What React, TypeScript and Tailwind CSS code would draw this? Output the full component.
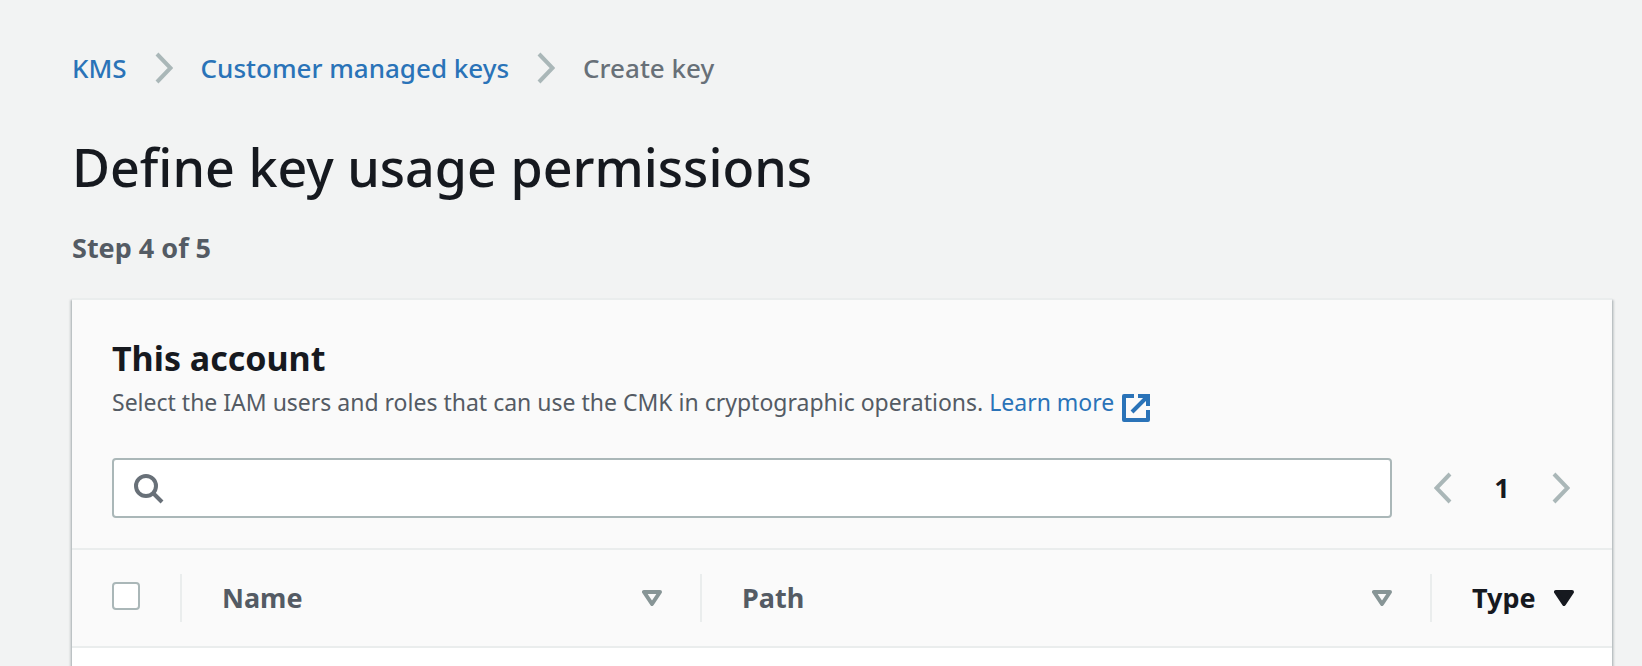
import { useState } from "react";

function Chevron({ left = false }: { left?: boolean }) {
  return (
    <svg width="18" height="32" viewBox="0 0 18 32" fill="none" stroke="#aab7b8" strokeWidth="4" aria-hidden="true">
      <path d={left ? "M16 2 L2.5 16 L16 30" : "M2 2 L15.5 16 L2 30"} />
    </svg>
  );
}

function SearchIcon() {
  return (
    <svg width="32" height="32" viewBox="0 0 32 32" fill="none" stroke="#687078" strokeWidth="4" aria-hidden="true">
      <circle cx="14" cy="14" r="10" />
      <path d="M21 21 L30 30" />
    </svg>
  );
}

function ExternalIcon() {
  return (
    <svg width="28" height="28" viewBox="0 0 28 28" fill="none" stroke="#2a73b8" strokeWidth="4" aria-hidden="true">
      <path d="M12 2 H2 V26 H26 V16" strokeLinejoin="round" />
      <path d="M16 2 H26 V12" />
      <path d="M25 3 L10 18" />
    </svg>
  );
}

function SortIcon({ active = false }: { active?: boolean }) {
  return active ? (
    <svg width="20" height="16" viewBox="0 0 20 16" aria-hidden="true">
      <path d="M2 2 H18 L10 14 Z" fill="#16191f" stroke="#16191f" strokeWidth="4" strokeLinejoin="round" />
    </svg>
  ) : (
    <svg width="20" height="16" viewBox="0 0 20 16" aria-hidden="true">
      <path d="M2 2 H18 L10 14 Z" fill="none" stroke="#879596" strokeWidth="4" strokeLinejoin="round" />
    </svg>
  );
}

export default function App() {
  const [query, setQuery] = useState("");
  const [all, setAll] = useState(false);

  return (
    <div className="flex min-h-screen flex-col bg-[#f2f3f3] pl-[72px] pr-[30px] pt-12 font-['Noto_Sans','Open_Sans',sans-serif] text-[27px] leading-10 text-[#16191f]">
      <nav aria-label="Breadcrumb">
        <ol className="flex items-center gap-7 text-[26px] font-medium text-[#687078]">
          <li>
            <a href="#kms" className="text-[#2a73b8]">KMS</a>
          </li>
          <li><Chevron /></li>
          <li>
            <a href="#keys" className="text-[#2a73b8]">Customer managed keys</a>
          </li>
          <li><Chevron /></li>
          <li aria-current="page">Create key</li>
        </ol>
      </nav>

      <h1 className="mt-12 text-[52px] font-medium leading-[62px]">Define key usage permissions</h1>
      <p className="mt-[30px] font-bold text-[#545b64]">Step 4 of 5</p>

      <main className="mt-[30px] flex grow flex-col bg-white shadow-[0_2px_2px_rgba(0,28,36,0.3),2px_2px_2px_rgba(0,28,36,0.15),-2px_2px_2px_rgba(0,28,36,0.15)]">
        <header className="border-y-2 border-[#eaeded] bg-[#fafafa] px-10 pt-[34px] pb-[30px]">
          <h2 className="text-[34px] font-bold leading-[48px]">This account</h2>
          <p className="flex items-center gap-2 text-[23px] leading-10 text-[#545b64]">
            <span>
              Select the IAM users and roles that can use the CMK in cryptographic operations.{" "}
              <a href="#learn" className="text-[#2a73b8]">Learn more</a>
            </span>
            <a href="#learn" aria-label="Learn more, opens in a new tab" className="pt-3"><ExternalIcon /></a>
          </p>
          <div className="mt-9 flex items-center gap-[42px]">
            <label className="flex h-[60px] grow items-center gap-4 rounded border-2 border-[#aab7b8] bg-white px-[18px]">
              <SearchIcon />
              <input
                type="text"
                aria-label="Search users and roles"
                value={query}
                onChange={(e) => setQuery(e.target.value)}
                className="min-w-0 grow outline-none"
              />
            </label>
            <div className="flex items-center gap-10 pr-0.5">
              <button type="button" aria-label="Previous page"><Chevron left /></button>
              <button type="button" className="w-5 font-bold">1</button>
              <button type="button" aria-label="Next page"><Chevron /></button>
            </div>
          </div>
        </header>

        <table className="w-full table-fixed text-left text-[#545b64]">
          <colgroup>
            <col className="w-[110px]" />
            <col className="w-[520px]" />
            <col />
            <col className="w-[180px]" />
          </colgroup>
          <thead>
            <tr className="border-b-2 border-[#eaeded] bg-[#fafafa]">
              <th className="py-6">
                <div className="flex h-12 items-start border-r-2 border-[#eaeded] pl-10 pt-2">
                  <input
                    type="checkbox"
                    aria-label="Select all"
                    checked={all}
                    onChange={(e) => setAll(e.target.checked)}
                    className="size-7 appearance-none rounded border-2 border-[#aab7b8] bg-white checked:bg-[#2a73b8]"
                  />
                </div>
              </th>
              <th className="py-6">
                <button type="button" className="flex h-12 w-full items-center justify-between border-r-2 border-[#eaeded] pl-10 pr-[38px]">
                  Name
                  <SortIcon />
                </button>
              </th>
              <th className="py-6">
                <button type="button" className="flex h-12 w-full items-center justify-between border-r-2 border-[#eaeded] pl-10 pr-[38px]">
                  Path
                  <SortIcon />
                </button>
              </th>
              <th className="py-6" aria-sort="descending">
                <button type="button" className="flex h-12 w-full items-center justify-between pl-10 pr-[38px] text-[#16191f]">
                  Type
                  <SortIcon active />
                </button>
              </th>
            </tr>
          </thead>
        </table>
      </main>
    </div>
  );
}
